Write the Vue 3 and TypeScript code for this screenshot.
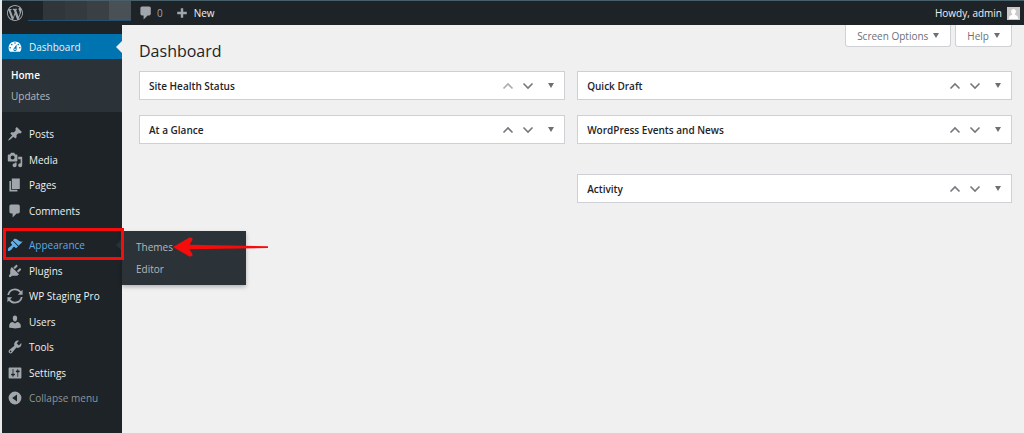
<script setup lang="ts">
interface MenuItem {
  label: string
  icon: string
  kind?: 'current' | 'open' | 'muted'
}

const icons: Record<string, string> = {
  wordpress:
    'M20 10c0-5.51-4.49-10-10-10C4.48 0 0 4.49 0 10c0 5.52 4.48 10 10 10 5.51 0 10-4.48 10-10zM7.78 15.37L4.37 6.22c.55-.02 1.17-.08 1.17-.08.5-.06.44-1.13-.06-1.11 0 0-1.45.11-2.37.11-.18 0-.37 0-.58-.01C4.12 2.69 6.87 1.11 10 1.11c2.33 0 4.45.87 6.05 2.34-.68-.11-1.65.39-1.65 1.58 0 .74.45 1.36.9 2.1.35.61.55 1.36.55 2.46 0 1.49-1.4 5-1.4 5l-3.03-8.37c.54-.02.82-.17.82-.17.5-.05.44-1.25-.06-1.22 0 0-1.44.12-2.38.12-.87 0-2.33-.12-2.33-.12-.5-.03-.56 1.2-.06 1.22l.92.08 1.26 3.41zM17.41 10c.24-.64.74-1.87.43-4.25.7 1.29 1.05 2.71 1.05 4.25 0 3.29-1.73 6.24-4.4 7.78.97-2.59 1.94-5.2 2.92-7.78zM6.1 18.09C3.12 16.65 1.11 13.53 1.11 10c0-1.3.23-2.48.72-3.59C3.25 10.3 4.67 14.2 6.1 18.09zm4.03-6.63l2.58 6.98c-.86.29-1.76.45-2.71.45-.79 0-1.57-.11-2.29-.33.81-2.38 1.62-4.74 2.42-7.1z',
  plus: 'M8 2h4v6h6v4h-6v6H8v-6H2V8h6z',
  dashboard:
    'M3.76 16h12.48c1.1-1.37 1.76-3.11 1.76-5 0-4.42-3.58-8-8-8s-8 3.58-8 8c0 1.89.66 3.63 1.76 5zM10 4c.55 0 1 .45 1 1s-.45 1-1 1-1-.45-1-1 .45-1 1-1zM6 6c.55 0 1 .45 1 1s-.45 1-1 1-1-.45-1-1 .45-1 1-1zm8 0c.55 0 1 .45 1 1s-.45 1-1 1-1-.45-1-1 .45-1 1-1zm-5.37 5.55L12 7v6c0 1.1-.9 2-2 2s-2-.9-2-2c0-.57.24-1.08.63-1.45zM4 10c.55 0 1 .45 1 1s-.45 1-1 1-1-.45-1-1 .45-1 1-1zm12 0c.55 0 1 .45 1 1s-.45 1-1 1-1-.45-1-1 .45-1 1-1zm-5 3c0-.55-.45-1-1-1s-1 .45-1 1 .45 1 1 1 1-.45 1-1z',
  posts:
    'M10.44 3.02l1.82-1.82 6.36 6.35-1.83 1.82c-1.05-.68-2.48-.57-3.41.36l-.75.75c-.92.93-1.04 2.35-.35 3.41l-1.83 1.82-2.41-2.41-2.8 2.79c-.42.42-3.38 2.71-3.8 2.29s1.86-3.39 2.28-3.81l2.79-2.79L4.1 9.36l1.83-1.82c1.05.69 2.48.57 3.4-.36l.75-.75c.93-.92 1.05-2.35.36-3.41z',
  media:
    'M13 11V4c0-.55-.45-1-1-1h-1.67L9 1H5L3.67 3H2c-.55 0-1 .45-1 1v7c0 .55.45 1 1 1h10c.55 0 1-.45 1-1zM7 4.5c1.38 0 2.5 1.12 2.5 2.5S8.38 9.5 7 9.5 4.5 8.38 4.5 7 5.62 4.5 7 4.5zM14 6h5v10.5c0 1.38-1.12 2.5-2.5 2.5S14 17.88 14 16.5s1.12-2.5 2.5-2.5c.17 0 .34.02.5.05V9h-3V6zm-4 8.05V13h2v3.5c0 1.38-1.12 2.5-2.5 2.5S7 17.88 7 16.5 8.12 14 9.5 14c.17 0 .34.02.5.05z',
  pages: 'M6 15V2h10v13H6zm-1 1h8v2H3V5h2v11z',
  comments:
    'M5 2h9c1.1 0 2 .9 2 2v7c0 1.1-.9 2-2 2h-2l-5 5v-5H5c-1.1 0-2-.9-2-2V4c0-1.1.9-2 2-2z',
  appearance:
    'M14.48 11.06L7.41 3.99l1.5-1.5c.5-.56 2.3-.47 3.51.32 1.21.8 1.43 1.28 2.91 2.1 1.18.64 2.45 1.26 4.45.85zm-.71.71L6.7 4.7 4.93 6.47c-.39.39-.39 1.02 0 1.41l1.06 1.06c.39.39.39 1.03 0 1.42-.6.6-1.43 1.11-2.21 1.69-.35.26-.7.53-1.01.84C1.43 14.23.4 16.08 1.4 17.07c.99 1 2.84-.03 4.18-1.36.31-.31.58-.66.85-1.02.57-.78 1.08-1.61 1.69-2.21.39-.39 1.02-.39 1.41 0l1.06 1.06c.39.39 1.02.39 1.41 0z',
  plugins:
    'M13.11 4.36L9.87 7.6 8 5.73l3.24-3.24c.35-.34 1.05-.2 1.56.32.52.51.66 1.21.31 1.55zm-8 1.77l.91-1.12 9.01 9.01-1.19.84c-.71.71-2.63 1.16-3.82 1.16H6.14L4.9 17.26c-.59.59-1.54.59-2.12 0-.59-.58-.59-1.53 0-2.12l1.24-1.24v-3.88c0-1.13.4-3.19 1.09-3.89zm7.26 3.97l3.24-3.24c.34-.35 1.04-.21 1.55.31.52.51.66 1.21.31 1.55l-3.24 3.25z',
  staging:
    'M.5 8.6C1.2 4 5.1.5 10 .5c3.100 0 5.800 1.500 7.600 3.700L19.500 2.300V8.300H13.500L16 5.800C14.600 3.900 12.400 2.700 10 2.700 6.300 2.700 3.400 5.200 2.700 8.600zM19.500 11.400C18.800 16 14.900 19.500 10 19.500c-3.100 0-5.800-1.500-7.600-3.700L.5 17.700V11.700H6.500L4 14.200c1.400 1.900 3.600 3.100 6 3.100 3.700 0 6.600-2.500 7.300-5.900z',
  users:
    'M10 9.25c-2.27 0-2.73-3.44-2.73-3.44C7 4.02 7.82 2 9.97 2c2.16 0 2.98 2.02 2.71 3.81 0 0-.41 3.44-2.68 3.44zm0 2.57L12.72 10c2.39 0 4.52 2.33 4.52 4.53v2.49s-3.65 1.13-7.24 1.13c-3.65 0-7.24-1.13-7.24-1.13v-2.49c0-2.25 1.94-4.48 4.47-4.48z',
  tools:
    'M16.68 9.77c-1.34 1.34-3.3 1.67-4.95.99l-5.41 6.52c-.99.99-2.59.99-3.58 0s-.99-2.59 0-3.57l6.52-5.42c-.68-1.65-.35-3.61.99-4.95 1.28-1.28 3.12-1.62 4.72-1.06l-2.89 2.89 2.82 2.82 2.86-2.87c.53 1.58.18 3.39-1.08 4.65zM3.81 16.21c.4.39 1.04.39 1.43 0 .4-.4.4-1.04 0-1.43-.39-.4-1.03-.4-1.43 0-.39.39-.39 1.03 0 1.43z',
  settings:
    'M18 16V4c0-.55-.45-1-1-1H3c-.55 0-1 .45-1 1v12c0 .55.45 1 1 1h14c.55 0 1-.45 1-1zM8 11h1c.55 0 1 .45 1 1s-.45 1-1 1H8v1.5c0 .28-.22.5-.5.5s-.5-.22-.5-.5V13H6c-.55 0-1-.45-1-1s.45-1 1-1h1V5.5c0-.28.22-.5.5-.5s.5.22.5.5V11zm5-2h-1c-.55 0-1-.45-1-1s.45-1 1-1h1V5.5c0-.28.22-.5.5-.5s.5.22.5.5V7h1c.55 0 1 .45 1 1s-.45 1-1 1h-1v5.5c0 .28-.22.5-.5.5s-.5-.22-.5-.5V9z',
  collapse:
    'M10 2a8 8 0 1 0 0 16a8 8 0 1 0 0-16zM12.500 5.500v9L6.500 10z',
}

const contentMenu: MenuItem[] = [
  { label: 'Posts', icon: 'posts' },
  { label: 'Media', icon: 'media' },
  { label: 'Pages', icon: 'pages' },
  { label: 'Comments', icon: 'comments' },
]

const siteMenu: MenuItem[] = [
  { label: 'Appearance', icon: 'appearance', kind: 'open' },
  { label: 'Plugins', icon: 'plugins' },
  { label: 'WP Staging Pro', icon: 'staging' },
  { label: 'Users', icon: 'users' },
  { label: 'Tools', icon: 'tools' },
  { label: 'Settings', icon: 'settings' },
]

const columns: { title: string; first?: boolean; apart?: boolean }[][] = [
  [{ title: 'Site Health Status', first: true }, { title: 'At a Glance' }],
  [
    { title: 'Quick Draft' },
    { title: 'WordPress Events and News' },
    { title: 'Activity', apart: true },
  ],
]
</script>

<template>
  <div class="admin">
    <header class="bar">
      <a class="bar-logo" href="#" aria-label="About WordPress">
        <svg class="icon" viewBox="0 0 20 20"><path :d="icons.wordpress" /></svg>
      </a>
      <a class="site" href="#" aria-label="Visit site">
        <i></i><i></i><i></i><i></i><i></i>
      </a>
      <a class="bar-comments" href="#">
        <svg class="icon" viewBox="0 0 20 20"><path :d="icons.comments" /></svg>
        <span>0</span>
      </a>
      <a class="bar-new" href="#">
        <svg class="icon small" viewBox="0 0 20 20"><path :d="icons.plus" /></svg>
        <span>New</span>
      </a>
      <a class="account" href="#">
        <span>Howdy, admin</span>
        <svg class="avatar" viewBox="0 0 13 13">
          <rect width="13" height="13" fill="#c9c9c9" />
          <path
            d="M6.500 2a2.300 2.600 0 0 1 1.300 4.800v1c1.700.5 3.200 1.200 3.400 4.200H1.800c.2-3 1.700-3.700 3.400-4.200v-1A2.300 2.600 0 0 1 6.500 2z"
            fill="#fff"
          />
        </svg>
      </a>
    </header>

    <div class="body">
      <nav class="side" aria-label="Main menu">
        <a class="item current" href="#">
          <svg class="icon" viewBox="0 0 20 20"><path fill-rule="evenodd" :d="icons.dashboard" /></svg>
          <span>Dashboard</span>
        </a>
        <div class="sub">
          <a class="here" href="#">Home</a>
          <a href="#">Updates</a>
        </div>
        <ul class="menu">
          <li v-for="m in contentMenu" :key="m.label">
            <a class="item" href="#">
              <svg class="icon" viewBox="0 0 20 20"><path :d="icons[m.icon]" /></svg>
              <span>{{ m.label }}</span>
            </a>
          </li>
        </ul>
        <ul class="menu">
          <li v-for="m in siteMenu" :key="m.label">
            <a class="item" :class="m.kind" href="#">
              <svg class="icon" viewBox="0 0 20 20"><path :d="icons[m.icon]" /></svg>
              <span>{{ m.label }}</span>
            </a>
            <template v-if="m.kind === 'open'">
              <div class="flyout">
                <a href="#">Themes</a>
                <a href="#">Editor</a>
              </div>
              <div class="frame"></div>
              <svg class="pointer" viewBox="0 0 96 20">
                <path
                  d="M0 10L16 .8C18.500-.4 20.500 1.500 19 3.600L16.500 7.800L95 9.200V11L16.500 12.200L19 16.400C20.500 18.500 18.500 20.400 16 19.200z"
                  fill="#f60c0a"
                />
              </svg>
            </template>
          </li>
          <li>
            <button class="item muted" type="button">
              <svg class="icon" viewBox="0 0 20 20"><path fill-rule="evenodd" :d="icons.collapse" /></svg>
              <span>Collapse menu</span>
            </button>
          </li>
        </ul>
      </nav>

      <main class="main">
        <div class="tabs">
          <button type="button">Screen Options<b class="caret"></b></button>
          <button type="button">Help<b class="caret"></b></button>
        </div>
        <h1>Dashboard</h1>
        <div class="columns">
          <div v-for="(col, i) in columns" :key="i" class="column">
            <section v-for="c in col" :key="c.title" class="card" :class="{ apart: c.apart }">
              <h2>{{ c.title }}</h2>
              <button type="button" aria-label="Move up" :class="{ faded: c.first }">
                <svg viewBox="0 0 12 8"><path d="M1.500 6.500L6 2L10.500 6.500" /></svg>
              </button>
              <button type="button" aria-label="Move down">
                <svg viewBox="0 0 12 8"><path d="M1.500 1.500L6 6L10.500 1.500" /></svg>
              </button>
              <button class="toggle" type="button" aria-label="Toggle panel">
                <b class="caret"></b>
              </button>
            </section>
          </div>
        </div>
      </main>
    </div>
  </div>
</template>

<style>
body {
  margin: 0;
  background: #f0f0f1;
}
</style>

<style scoped>
.admin {
  display: flex;
  flex-direction: column;
  min-height: 100vh;
  box-sizing: border-box;
  border-left: 2px solid #e9eaeb;
  font-family: "Open Sans", "Noto Sans", sans-serif;
  font-size: 10px;
  line-height: 16px;
  color: #f0f0f1;
}
a {
  color: inherit;
  text-decoration: none;
}
button {
  padding: 0;
  border: 0;
  background: none;
  color: inherit;
  font: inherit;
  text-align: left;
}
.icon {
  flex: none;
  width: 16px;
  height: 16px;
  fill: #a0a6ab;
}
.icon.small {
  width: 12px;
  height: 12px;
}

.bar {
  display: flex;
  align-items: center;
  height: 24px;
  border-top: 1px solid #47606a;
  background: #1d2327;
}
.bar a {
  display: flex;
  align-items: center;
}
.bar-logo {
  margin: 0 5px;
}
.bar .site {
  align-self: flex-start;
  height: 19px;
  border-bottom: 1px solid #245070;
}
.site i {
  width: 22px;
  height: 100%;
  background: #30363a;
}
.site i:first-child {
  width: 15px;
  background: #1e2428;
}
.site i:nth-child(3) {
  background: #353a3e;
}
.site i:nth-child(4) {
  background: #3b4044;
}
.site i:nth-child(5) {
  background: #495157;
}
.bar-comments {
  gap: 3px;
  margin-left: 7px;
  color: #a0a6ab;
}
.bar-new {
  gap: 6px;
  margin-left: 13px;
}
.account {
  gap: 5px;
  margin-left: auto;
  padding-right: 4px;
}
.avatar {
  width: 13px;
  height: 13px;
}

.body {
  display: flex;
  flex: 1;
}
.side {
  flex: none;
  width: 120px;
  box-sizing: border-box;
  padding-top: 9px;
  background: #1d2327;
}
.item {
  display: flex;
  align-items: center;
  gap: 6px;
  width: 100%;
  height: 25px;
  box-sizing: border-box;
  padding-left: 5px;
  white-space: nowrap;
}
.current {
  position: relative;
  background: #0073b1;
}
.current .icon {
  fill: #fff;
}
.current::after,
.open::after {
  content: "";
  position: absolute;
  top: 7px;
  right: 0;
  border: 6px solid transparent;
  border-left: 0;
  border-right-color: #f0f0f1;
}
.open {
  color: #5fa8e2;
}
.open .icon {
  fill: #5fb0ec;
}
.open::after {
  border-right-color: #2c3338;
}
.muted {
  color: #8f959a;
}
.sub {
  display: flex;
  flex-direction: column;
  gap: 5px;
  padding: 8px 9px;
  background: #2c3338;
  color: #b4b9be;
}
.sub .here {
  color: #fff;
  font-weight: 600;
}
.menu {
  margin: 9px 0 0;
  padding: 0;
  list-style: none;
}
.menu li {
  position: relative;
}
.menu li:nth-child(odd) {
  margin-bottom: 1px;
}
.flyout {
  position: absolute;
  z-index: 1;
  top: -1px;
  left: 100%;
  display: flex;
  flex-direction: column;
  gap: 6px;
  width: 124px;
  box-sizing: border-box;
  padding: 8px 14px;
  background: #2c3338;
  box-shadow: 0 2px 4px rgba(0, 0, 0, 0.25);
  color: #b4b9be;
}
.frame {
  position: absolute;
  z-index: 2;
  inset: -4px -2px -3px 1px;
  border: 3px solid #f60c0a;
}
.pointer {
  position: absolute;
  z-index: 3;
  top: 5px;
  left: 171px;
  width: 96px;
  height: 20px;
}

.main {
  flex: 1;
  min-width: 0;
  padding: 0 12px 0 17px;
  color: #1d2327;
}
.tabs {
  display: flex;
  gap: 4px;
  float: right;
}
.tabs button {
  display: flex;
  align-items: center;
  gap: 5px;
  height: 22px;
  box-sizing: border-box;
  padding: 0 11px;
  border: 1px solid #d0d1d4;
  border-top: 0;
  border-radius: 0 0 3px 3px;
  background: #fff;
  color: #6c7075;
}
.caret {
  border: 3px solid transparent;
  border-top: 5px solid #6c7075;
  border-bottom: 0;
}
h1 {
  margin: 0;
  padding: 14px 0 8px;
  font-size: 16px;
  font-weight: 400;
  line-height: 24px;
}
.columns {
  display: grid;
  grid-template-columns: 49fr 50fr;
  gap: 12px;
}
.column {
  display: flex;
  flex-direction: column;
  gap: 15px;
}
.card {
  display: flex;
  align-items: center;
  height: 29px;
  box-sizing: border-box;
  padding: 0 10px 0 9px;
  border: 1px solid #cfd0d3;
  background: #fff;
}
.card.apart {
  margin-top: 15px;
}
h2 {
  flex: 1;
  margin: 0;
  font-size: 10px;
  font-weight: 600;
}
.card button {
  display: flex;
  justify-content: center;
  width: 20px;
}
.card svg {
  width: 12px;
  height: 8px;
  fill: none;
  stroke: #74787c;
  stroke-width: 1.6;
}
.card .faded {
  opacity: 0.6;
}
.card .toggle {
  width: 6px;
  margin-left: 10px;
}
</style>
